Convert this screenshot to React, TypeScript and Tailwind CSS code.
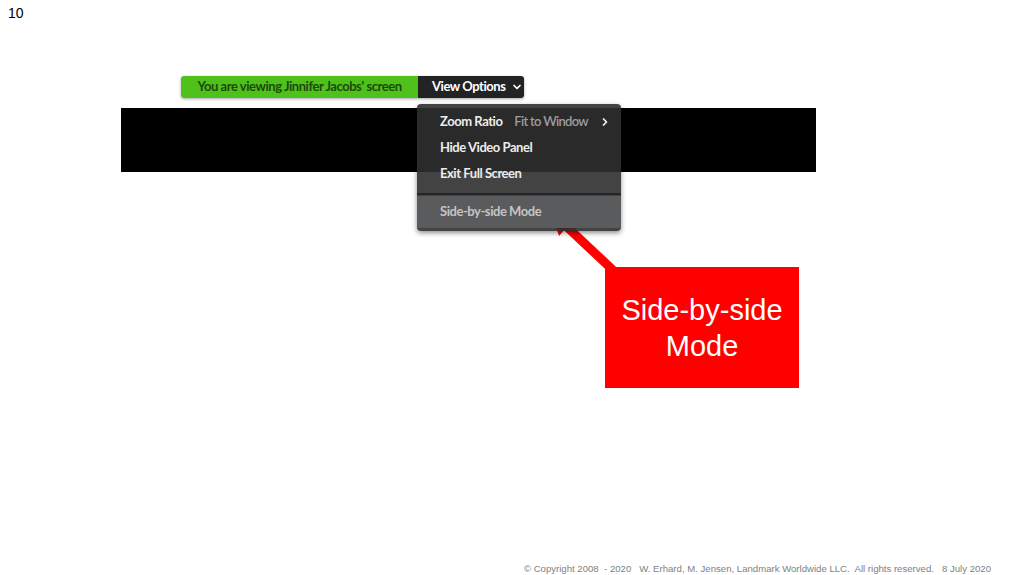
import { ChevronDown, ChevronRight } from "lucide-react";

const uiFont = { fontFamily: "Lato, 'Open Sans', sans-serif" };

const MenuItem = ({ label, hint, active }: { label: string; hint?: string; active?: boolean }) => (
  <div
    className={`flex items-center pl-[23px] pr-[10px] text-[13px] font-bold tracking-[-0.45px] ${
      active ? "bg-[#5a5b5c] text-[#c4c4c4] h-[32px]" : "h-[26px] text-[#ececec]"
    }`}
  >
    <span>{label}</span>
    {hint && (
      <span className="ml-auto flex items-center gap-[11px] text-[#9d9d9d] font-semibold tracking-[-0.7px]">
        {hint}
        <ChevronRight size={12} strokeWidth={3.5} className="text-[#f0f0f0]" />
      </span>
    )}
  </div>
);

const App = () => {
  return (
    <div
      className="relative w-[1024px] h-[575px] bg-white overflow-hidden flex flex-col"
      style={{ fontFamily: "'Liberation Sans', Arial, sans-serif" }}
    >
      <div className="pl-[8px] pt-[3px] h-[76px] text-[14px] text-black">10</div>

      {/* screen share banner */}
      <div className="ml-[181px] flex h-[22px] w-[343px] shadow-[0_1px_3px_rgba(0,0,0,0.35)] rounded-[3px]" style={uiFont}>
        <div className="flex items-center justify-center w-[237px] bg-[#4ec21a] rounded-l-[3px] text-[#1d4a0c] text-[13px] font-bold tracking-[-0.45px]">
          You are viewing Jinnifer Jacobs' screen
        </div>
        <div className="relative flex items-center gap-[6px] pl-[14px] flex-1 bg-[#222324] rounded-r-[3px] text-white text-[13px] font-bold tracking-[-0.45px]">
          View Options
          <ChevronDown size={12} strokeWidth={3.5} />

          {/* dropdown */}
          <div className="absolute left-[-1px] top-[28px] w-[204px] pt-[5px] pb-[3px] rounded-[4px] bg-[#2f2f2f]/90 shadow-[0_2px_5px_rgba(0,0,0,0.45)] z-10">
            <MenuItem label="Zoom Ratio" hint="Fit to Window" />
            <MenuItem label="Hide Video Panel" />
            <MenuItem label="Exit Full Screen" />
            <div className="mt-[6px] mb-[1px] h-[2px] bg-[#262626]" />
            <MenuItem label="Side-by-side Mode" active />
          </div>
        </div>
      </div>

      <div className="ml-[121px] mt-[10px] w-[695px] h-[64px] bg-black" />

      {/* callout */}
      <div className="ml-[605px] mt-[95px] w-[194px] h-[121px] bg-[#ff0000] flex items-center justify-center text-center text-white text-[29px] leading-[36px]">
        Side-by-side
        <br />
        Mode
      </div>

      <svg className="absolute left-0 top-0 pointer-events-none" width="1024" height="575">
        <line x1="616" y1="273" x2="566" y2="226" stroke="#ff0000" strokeWidth="9" />
        <polygon points="551,212 575,218 559,236" fill="#ff0000" />
      </svg>

      <div className="mt-auto mb-0 pr-[33px] text-right text-[9.6px] leading-[12px] text-[#7f7f7f] whitespace-pre">
        © Copyright 2008  - 2020   W. Erhard, M. Jensen, Landmark Worldwide LLC.  All rights reserved.   8 July 2020
      </div>
    </div>
  );
};

export default App;
